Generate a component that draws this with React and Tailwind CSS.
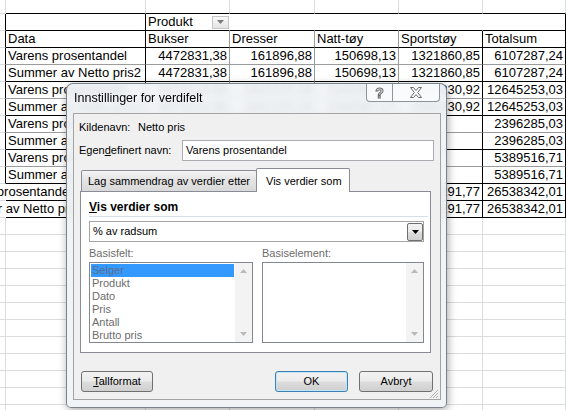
import React from "react";

// column widths incl. right border: A (partial), B .. G
const W = ["w-[6px]", "w-[140px]", "w-[84px]", "w-[85px]", "w-[84px]", "w-[84px]", "w-[83px]"];

const RG = "border-r-[#dadcdd]";
const RK = "border-r-black";
const RM = "border-r-[#9c9c9c]";
const RN = "border-r-transparent";
const BG = "border-b-[#dadcdd]";
const BK = "border-b-black";
const BM = "border-b-[#9c9c9c]";

const values = [
  ["Varens prosentandel", "4472831,38", "161896,88", "150698,13", "1321860,85", "6107287,24"],
  ["Summer av Netto pris2", "4472831,38", "161896,88", "150698,13", "1321860,85", "6107287,24"],
  ["Varens prosentandel", "5873214,66", "1841220,18", "2340587,27", "2590230,92", "12645253,03"],
  ["Summer av Netto pris2", "5873214,66", "1841220,18", "2340587,27", "2590230,92", "12645253,03"],
  ["Varens prosentandel", "1204511,40", "598342,17", "593431,46", "", "2396285,03"],
  ["Summer av Netto pris2", "1204511,40", "598342,17", "593431,46", "", "2396285,03"],
  ["Varens prosentandel", "2810034,12", "1104622,93", "1474859,66", "", "5389516,71"],
  ["Summer av Netto pris2", "2810034,12", "1104622,93", "1474859,66", "", "5389516,71"],
  ["Varens prosentandel", "14360591,56", "3706082,16", "4559277,52", "3912291,77", "26538342,01"],
  ["Summer av Netto pris2", "14360591,56", "3706082,16", "4559277,52", "3912291,77", "26538342,01"],
];

const btnBg = "bg-[linear-gradient(#f2f2f2_0%,#ebebeb_48%,#dddddd_52%,#cfcfcf_100%)]";

function Cell({ i, r, b, right, clip = true, pad = "px-[2px]", className = "", children }) {
  return (
    <div
      className={`${W[i]} ${r} ${b} ${pad} ${clip ? "overflow-hidden" : "overflow-visible"} ${
        right ? "text-right" : ""
      } ${className} h-full shrink-0 whitespace-nowrap border-r border-b leading-[16px]`}
    >
      {children}
    </div>
  );
}

function Sheet() {
  return (
    <div className="flex flex-col">
      {/* partial top row */}
      <div className="flex h-[14px]">
        <Cell i={0} r={RG} b={BG} />
        {[1, 2, 3, 4, 5, 6].map((i) => (
          <Cell key={i} i={i} r={RG} b={BK} />
        ))}
      </div>

      {/* Produkt row */}
      <div className="flex h-[17px]">
        <Cell i={0} r={RK} b={BG} />
        <Cell i={1} r={RK} b={BK} />
        <Cell i={2} r={RN} b={BK} pad="pl-[2px]" className="flex items-center justify-between">
          <span>Produkt</span>
          <span className="flex h-[13px] w-[17px] items-center justify-center border border-[#c6c6c6] bg-[linear-gradient(#fafafa,#e4e4e4)]">
            <svg width="7" height="4" viewBox="0 0 7 4">
              <path d="M0 0h7L3.5 4z" fill="#7b7b7b" />
            </svg>
          </span>
        </Cell>
        <Cell i={3} r={RN} b={BK} />
        <Cell i={4} r={RN} b={BK} />
        <Cell i={5} r={RN} b={BK} />
        <Cell i={6} r={RK} b={BK} />
      </div>

      {/* Data row */}
      <div className="flex h-[17px]">
        <Cell i={0} r={RK} b={BG} />
        <Cell i={1} r={RK} b={BK}>Data</Cell>
        <Cell i={2} r={RM} b={BK}>Bukser</Cell>
        <Cell i={3} r={RM} b={BK}>Dresser</Cell>
        <Cell i={4} r={RM} b={BK}>Natt-tøy</Cell>
        <Cell i={5} r={RK} b={BK}>Sportstøy</Cell>
        <Cell i={6} r={RK} b={BK}>Totalsum</Cell>
      </div>

      {values.map((v, k) => {
        const b = k < 8 && k % 2 === 0 ? BM : BK;
        const over = k >= 8;
        return (
          <div key={k} className="flex h-[17px]">
            <Cell i={0} r={over ? RN : RK} b={BG} />
            <Cell i={1} r={RK} b={b} clip={!over}>
              <span className={over ? "ml-[-55px]" : ""}>{v[0]}</span>
            </Cell>
            <Cell i={2} r={RM} b={b} right>{v[1]}</Cell>
            <Cell i={3} r={RM} b={b} right>{v[2]}</Cell>
            <Cell i={4} r={RM} b={b} right>{v[3]}</Cell>
            <Cell i={5} r={RK} b={b} right>{v[4]}</Cell>
            <Cell i={6} r={RK} b={b} right>{v[5]}</Cell>
          </div>
        );
      })}

      {Array.from({ length: 12 }).map((_, k) => (
        <div key={"e" + k} className="flex h-[17px]">
          {[0, 1, 2, 3, 4, 5, 6].map((i) => (
            <Cell key={i} i={i} r={RG} b={BG} />
          ))}
        </div>
      ))}
    </div>
  );
}

function ScrollArrows() {
  return (
    <div className="flex w-[17px] shrink-0 flex-col items-center justify-between bg-[#f3f3f3] py-[6px]">
      <svg width="7" height="4" viewBox="0 0 7 4">
        <path d="M0 4h7L3.5 0z" fill="#b9b9b9" />
      </svg>
      <svg width="7" height="4" viewBox="0 0 7 4">
        <path d="M0 0h7L3.5 4z" fill="#b9b9b9" />
      </svg>
    </div>
  );
}

function Dialog() {
  const fields = ["Selger", "Produkt", "Dato", "Pris", "Antall", "Brutto pris"];
  return (
    <div className="absolute left-[66px] top-[83px] h-[325px] w-[381px] rounded-t-[7px] rounded-b-[5px] border border-[#5d6670]/80 bg-[#f0f3f6]/90 font-['Liberation_Sans',Arial,sans-serif] text-[11px] text-black shadow-[1px_2px_8px_rgba(0,0,0,0.35)] backdrop-blur-[3px]">
      {/* title bar */}
      <div className="relative h-[29px] pl-[7px] pt-[6px] text-[12.5px] leading-[16px]">
        Innstillinger for verdifelt
        <div className="absolute right-[6px] top-0 flex h-[18px]">
          <div className="flex w-[27px] items-center justify-center rounded-bl-[4px] border border-t-0 border-[#8d949c] bg-white/60">
            <span className="text-[14px] font-bold leading-[14px] text-white [-webkit-text-stroke:1px_#6a6a6a]">?</span>
          </div>
          <div className="flex w-[47px] items-center justify-center rounded-br-[4px] border border-l-0 border-t-0 border-[#8d949c] bg-white/60">
            <svg width="12" height="11" viewBox="0 0 12 11">
              <polygon
                points="0.5,0.5 3.5,0.5 6,3.5 8.5,0.5 11.5,0.5 7.7,5.5 11.5,10.5 8.5,10.5 6,7.5 3.5,10.5 0.5,10.5 4.3,5.5"
                fill="#fff"
                stroke="#6a6a6a"
                strokeWidth="1"
              />
            </svg>
          </div>
        </div>
      </div>

      {/* client area */}
      <div className="relative ml-[6px] h-[287px] w-[368px] border border-[#a3a3a3] bg-[#f0f0f0]">
        <div className="mt-[5px] flex h-[16px] items-center pl-[5px]">
          <span className="w-[59px]">Kildenavn:</span>
          <span>Netto pris</span>
        </div>

        <div className="mt-[5px] flex h-[21px] items-center pl-[5px]">
          <span className="w-[103px]">
            Egen<span className="underline">d</span>efinert navn:
          </span>
          <div className="flex h-[21px] w-[252px] items-center border border-[#abadb3] bg-white pl-[3px]">
            Varens prosentandel
          </div>
        </div>

        {/* tabs */}
        <div className="ml-[6px] mt-[7px] flex h-[23px] items-end">
          <div className="ml-[1px] flex h-[21px] w-[176px] items-center rounded-t-[2px] border border-b-0 border-[#898c95] bg-[linear-gradient(#f3f3f3,#e3e3e3_50%,#d9d9d9)] pl-[6px]">
            Lag sammendrag av verdier etter
          </div>
          <div className="relative z-10 -mb-px -ml-px flex h-[24px] w-[94px] items-center rounded-t-[2px] border border-b-0 border-[#898c95] bg-white pl-[9px] pt-[1px]">
            Vis verdier som
          </div>
        </div>

        <div className="ml-[6px] h-[162px] w-[351px] border border-[#898c95] bg-white pl-[8px]">
          <div className="mt-[7px] h-[16px] text-[12px] font-bold leading-[16px]">
            <span className="underline">V</span>is verdier som
          </div>
          <div className="mt-[1px] h-px w-[339px] bg-[#d5dfe5]" />

          <div className="mt-[4px] flex h-[21px] w-[335px] items-center border border-[#a5a5a5] bg-white">
            <span className="flex-1 pl-[3px]">% av radsum</span>
            <div className={`flex h-[18px] w-[16px] items-center justify-center rounded-[2px] border border-[#707070] ${btnBg}`}>
              <svg width="7" height="4" viewBox="0 0 7 4">
                <path d="M0 0h7L3.5 4z" fill="#000" />
              </svg>
            </div>
          </div>

          <div className="mt-[3px] flex h-[16px] items-center text-[#6d6d6d]">
            <span className="w-[173px]">Basisfelt:</span>
            <span>Basiselement:</span>
          </div>

          <div className="mt-[1px] flex gap-[9px]">
            <div className="flex h-[81px] w-[164px] border border-[#828790] bg-white">
              <div className="flex-1 p-px">
                {fields.map((f, k) => (
                  <div
                    key={f}
                    className={`h-[13px] pl-[1px] leading-[13px] ${k === 0 ? "bg-[#3399ff] text-[#5b6f86]" : "text-[#6d6d6d]"}`}
                  >
                    {f}
                  </div>
                ))}
              </div>
              <ScrollArrows />
            </div>
            <div className="flex h-[81px] w-[162px] border border-[#828790] bg-white">
              <div className="flex-1" />
              <ScrollArrows />
            </div>
          </div>
        </div>

        {/* buttons */}
        <div className="mt-[18px] flex justify-between px-[7px]">
          <div className={`flex h-[21px] w-[72px] items-center justify-center rounded-[3px] border border-[#707070] ${btnBg}`}>
            <span>
              <span className="underline">T</span>allformat
            </span>
          </div>
          <div className="flex gap-[11px]">
            <div className={`flex h-[21px] w-[73px] items-center justify-center rounded-[3px] border border-[#3c7fb1] shadow-[inset_0_0_0_1px_#bfe6fb] ${btnBg}`}>
              OK
            </div>
            <div className={`flex h-[21px] w-[74px] items-center justify-center rounded-[3px] border border-[#707070] ${btnBg}`}>
              Avbryt
            </div>
          </div>
        </div>

        {/* resize grip */}
        <svg className="absolute bottom-[1px] right-[1px]" width="10" height="9" viewBox="0 0 10 9">
          <path d="M9 1L1 9M9 4L4 9M9 7L7 9" stroke="#b0b0b0" strokeWidth="1" />
        </svg>
      </div>
    </div>
  );
}

export default function App() {
  return (
    <div className="relative h-[410px] w-[566px] overflow-hidden bg-white font-['Liberation_Sans',Arial,sans-serif] text-[13px] text-black">
      <Sheet />
      <Dialog />
    </div>
  );
}
